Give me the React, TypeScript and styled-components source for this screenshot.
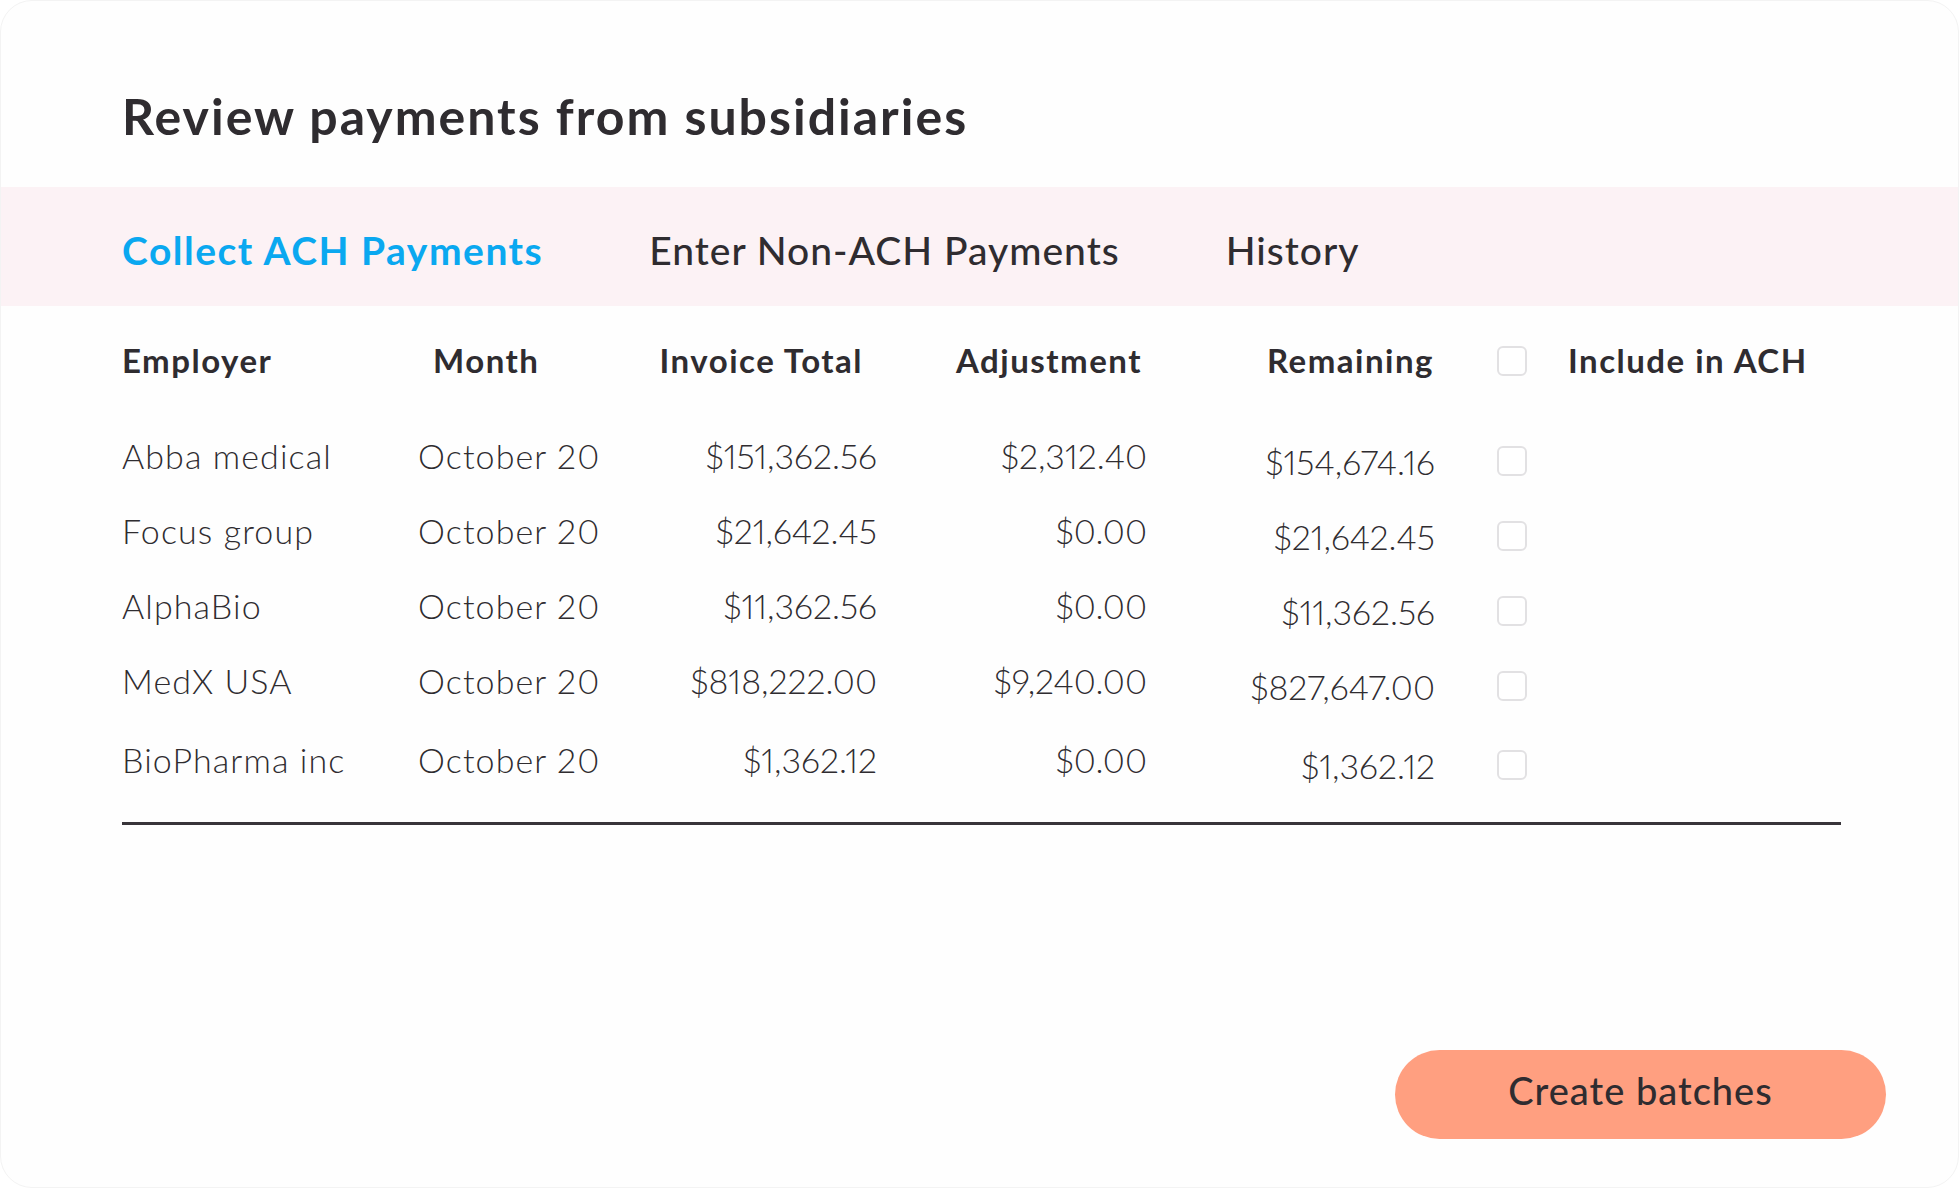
import React, { useState } from 'react';
import styled, { createGlobalStyle } from 'styled-components';

/*
Review payments page
1. title
2. tab strip (pink band)
3. payments table + footer button
*/

const GlobalStyle = createGlobalStyle`
  html, body {
    margin: 0;
    padding: 0;
    background: #ffffff;
  }
  * {
    box-sizing: border-box;
  }
`;

const ink = '#2f2c30';

const Card = styled.div`
  width: 100vw;
  height: 100vh;
  display: flex;
  flex-direction: column;
  background: #fefefe;
  border: 1px solid #f3f3f3;
  border-radius: 32px;
  overflow: hidden;
  font-family: Lato, 'Liberation Sans', sans-serif;
  color: ${ink};
`;

const Header = styled.header`
  flex: 0 0 186px;
  padding: 85px 0 0 121px;
`;

const Title = styled.h1`
  margin: 0;
  font-size: 50px;
  line-height: 60px;
  font-weight: 700;
  letter-spacing: 2px;
`;

const TabBar = styled.nav`
  flex: 0 0 119px;
  background: #fcf2f5;
  display: flex;
  align-items: center;
  gap: 106px;
  padding: 8px 0 0 121px;
`;

const Tab = styled.button<{ $active?: boolean }>`
  border: 0;
  background: none;
  padding: 0;
  font-family: inherit;
  font-size: 39px;
  line-height: 1.2;
  letter-spacing: ${p => (p.$active ? '1.5px' : '1px')};
  font-weight: ${p => (p.$active ? 700 : 500)};
  color: ${p => (p.$active ? '#0aa8f0' : ink)};
  cursor: pointer;
  &:focus {
    outline: none;
  }
`;

const TableWrap = styled.section`
  padding: 15px 117px 0 121px;
`;

const Grid = styled.div<{ $head?: boolean; $extra?: number }>`
  display: grid;
  grid-template-columns: 296px 200px 259px 270px 288px 133px 1fr;
  align-items: center;
  height: ${p => (p.$head ? '80px' : '75px')};
  margin-top: ${p => p.$extra || 0}px;
`;

const HeadCell = styled.div<{ $right?: boolean; $pl?: number; $pr?: number }>`
  font-size: 33px;
  line-height: 1.2;
  font-weight: 700;
  letter-spacing: 1.5px;
  text-align: ${p => (p.$right ? 'right' : 'left')};
  padding-left: ${p => p.$pl || 0}px;
  padding-right: ${p => p.$pr || 0}px;
  white-space: nowrap;
`;

const Cell = styled.div<{ $num?: boolean; $drop?: boolean }>`
  font-size: 34px;
  line-height: 1.2;
  font-weight: 300;
  letter-spacing: ${p => (p.$num ? '0px' : '1.1px')};
  font-variant-numeric: proportional-nums;
  text-align: ${p => (p.$num ? 'right' : 'left')};
  margin-top: ${p => (p.$drop ? '12px' : '0')};
  white-space: nowrap;
`;

const BoxCell = styled.div<{ $drop?: boolean }>`
  display: flex;
  padding-left: 62px;
  margin-top: ${p => (p.$drop ? '8px' : '0')};
`;

const Check = styled.button<{ $on?: boolean }>`
  width: 30px;
  height: 30px;
  padding: 0;
  border: 2px solid ${p => (p.$on ? '#0aa8f0' : '#e2e1e3')};
  border-radius: 6px;
  background: ${p => (p.$on ? '#0aa8f0' : '#ffffff')};
  cursor: pointer;
  &:focus {
    outline: none;
  }
`;

const Divider = styled.hr`
  margin: 24px 0 0;
  border: 0;
  height: 3px;
  background: #38353a;
`;

const Spacer = styled.div`
  flex: 1 1 auto;
`;

const Footer = styled.footer`
  display: flex;
  justify-content: flex-end;
  padding: 0 72px 48px 0;
`;

const PrimaryBtn = styled.button`
  width: 491px;
  height: 89px;
  padding: 0 0 10px;
  border: 0;
  border-radius: 45px;
  background: #ff9f80;
  color: ${ink};
  font-family: inherit;
  font-size: 38px;
  font-weight: 500;
  letter-spacing: 1px;
  cursor: pointer;
  &:hover {
    filter: brightness(97%);
  }
  &:focus {
    outline: none;
  }
`;

type Row = {
  employer: string;
  month: string;
  invoice: string;
  adjustment: string;
  remaining: string;
};

const rows: Row[] = [
  { employer: 'Abba medical', month: 'October 20', invoice: '$151,362.56', adjustment: '$2,312.40', remaining: '$154,674.16' },
  { employer: 'Focus group', month: 'October 20', invoice: '$21,642.45', adjustment: '$0.00', remaining: '$21,642.45' },
  { employer: 'AlphaBio', month: 'October 20', invoice: '$11,362.56', adjustment: '$0.00', remaining: '$11,362.56' },
  { employer: 'MedX USA', month: 'October 20', invoice: '$818,222.00', adjustment: '$9,240.00', remaining: '$827,647.00' },
  { employer: 'BioPharma inc', month: 'October 20', invoice: '$1,362.12', adjustment: '$0.00', remaining: '$1,362.12' },
];

const tabs = ['Collect ACH Payments', 'Enter Non-ACH Payments', 'History'];

export default function App() {
  const [activeTab, setActiveTab] = useState(0);
  const [checked, setChecked] = useState<boolean[]>(rows.map(() => false));
  const allOn = checked.every(Boolean);

  const toggle = (i: number) =>
    setChecked(prev => prev.map((v, j) => (j === i ? !v : v)));

  return (
    <>
      <GlobalStyle />
      <Card>
        <Header>
          <Title>Review payments from subsidiaries</Title>
        </Header>

        <TabBar>
          {tabs.map((t, i) => (
            <Tab key={t} $active={i === activeTab} onClick={() => setActiveTab(i)}>
              {t}
            </Tab>
          ))}
        </TabBar>

        <TableWrap>
          <Grid $head>
            <HeadCell>Employer</HeadCell>
            <HeadCell $pl={15}>Month</HeadCell>
            <HeadCell $right $pr={14}>Invoice Total</HeadCell>
            <HeadCell $right $pr={5}>Adjustment</HeadCell>
            <HeadCell $right $pr={1}>Remaining</HeadCell>
            <BoxCell>
              <Check
                $on={allOn}
                onClick={() => setChecked(rows.map(() => !allOn))}
              />
            </BoxCell>
            <HeadCell>Include in ACH</HeadCell>
          </Grid>

          {rows.map((r, i) => (
            <Grid key={r.employer} $extra={i === 0 ? 18 : i === rows.length - 1 ? 4 : 0}>
              <Cell>{r.employer}</Cell>
              <Cell>{r.month}</Cell>
              <Cell $num>{r.invoice}</Cell>
              <Cell $num>{r.adjustment}</Cell>
              <Cell $num $drop>{r.remaining}</Cell>
              <BoxCell $drop>
                <Check $on={checked[i]} onClick={() => toggle(i)} />
              </BoxCell>
              <div />
            </Grid>
          ))}

          <Divider />
        </TableWrap>

        <Spacer />

        <Footer>
          <PrimaryBtn>Create batches</PrimaryBtn>
        </Footer>
      </Card>
    </>
  );
}
